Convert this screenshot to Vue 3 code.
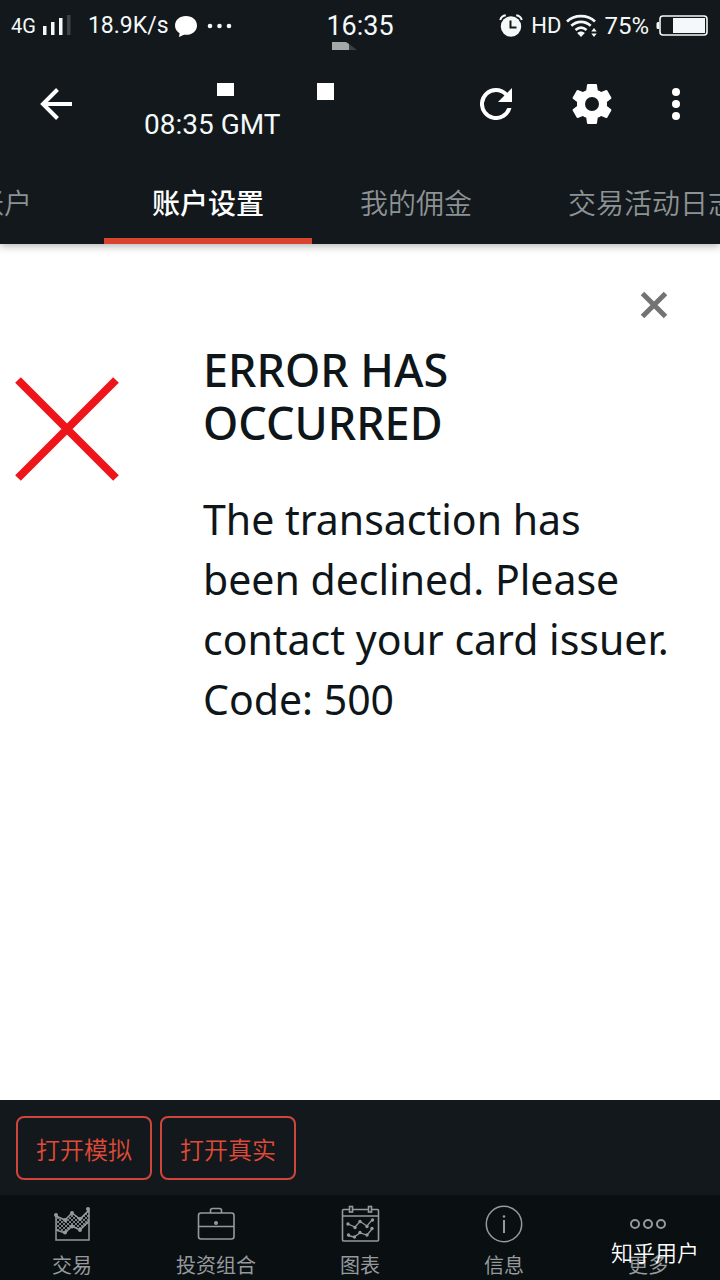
<script setup>
import { ref } from 'vue'

const tabs = ['账户', '账户设置', '我的佣金', '交易活动日志']
const activeTab = ref(1)
const open = ref(true)
const actions = ['打开模拟', '打开真实']
const nav = [
  { id: 'trade', label: '交易' },
  { id: 'portfolio', label: '投资组合' },
  { id: 'charts', label: '图表' },
  { id: 'info', label: '信息' },
  { id: 'more', label: '更多' },
]
</script>

<template>
  <div class="screen">
    <header class="top">
      <div class="status">
        <div class="status-left">
          <span class="network">4G</span>
          <svg class="signal" width="30" height="22" viewBox="0 0 30 22" aria-hidden="true">
            <g fill="#f4f8f8">
              <rect x="1" y="11" width="3.500" height="9" />
              <rect x="9" y="7" width="3.500" height="13" />
              <rect x="17" y="3" width="3.500" height="17" />
            </g>
            <rect x="25" y="0" width="3.500" height="20" fill="#3d4446" />
          </svg>
          <span class="speed">18.9K/s</span>
          <svg class="chat" width="24" height="24" viewBox="0 0 24 24" aria-hidden="true">
            <path d="M12 2C5.600 2 1 6 1 11.500c0 3.500 1.800 6 4.600 7.800L5 23l5-2.300c.7.100 1.300.1 2 .1 6.400 0 11-4 11-9.400S18.400 2 12 2z" fill="#fff" />
          </svg>
          <svg class="dots" width="26" height="8" viewBox="0 0 26 8" aria-hidden="true">
            <g fill="#f4f8f8"><circle cx="3" cy="4" r="2.300" /><circle cx="12.500" cy="4" r="2.300" /><circle cx="22" cy="4" r="2.300" /></g>
          </svg>
        </div>
        <div class="clock">
          16:35
          <svg class="clock-mark" width="26" height="8" viewBox="0 0 26 8" aria-hidden="true">
            <path d="M0 0h14l3 2v6H0z" fill="#a3a9a8" /><path d="M17 2l8 6h-8z" fill="#3b4243" />
          </svg>
        </div>
        <div class="status-right">
          <svg width="24" height="24" viewBox="0 0 24 24" aria-hidden="true">
            <circle cx="12" cy="12.500" r="10.200" fill="#f4f8f8" />
            <path d="M1.200 6C2 3.200 4 1.600 6.800 1.200M22.800 6C22 3.200 20 1.600 17.200 1.200" stroke="#f4f8f8" stroke-width="2" fill="none" />
            <path d="M11.500 6.500v7h6" stroke="#12181b" stroke-width="2" fill="none" />
          </svg>
          <span class="hd">HD</span>
          <svg class="wifi" width="32" height="24" viewBox="0 0 32 24" aria-hidden="true">
            <g fill="none" stroke="#f4f8f8" stroke-width="2.600">
              <path d="M1 7.500C8.500.3 21.500.3 29 7.500" />
              <path d="M5.300 11.800c5.600-5.200 13.800-5.200 19.400 0" />
              <path d="M9.500 16c3.400-3 7.600-3 11 0" />
            </g>
            <path d="M11.200 19c2.200-2 5.400-2 7.600 0L15 23z" fill="#f4f8f8" />
            <path d="M25.300 17.500l2.700-3.500 2.700 3.500zM25.300 19.500l2.700 3.500 2.700-3.500z" fill="#f4f8f8" />
          </svg>
          <span class="percent">75%</span>
          <svg class="battery" width="53" height="22" viewBox="0 0 53 22" aria-hidden="true">
            <rect x="4" y="1" width="47" height="19" rx="3" fill="none" stroke="#f4f8f8" stroke-width="1.600" />
            <path d="M3 7H2a1.500 1.500 0 0 0-1.500 1.500v4A1.500 1.500 0 0 0 2 14h1z" fill="#f4f8f8" />
            <rect x="17" y="3" width="32" height="15" fill="#f4f8f8" />
          </svg>
        </div>
      </div>

      <div class="toolbar">
        <button class="icon-button back" type="button" aria-label="返回">
          <svg width="32" height="32" viewBox="0 0 32 32"><path d="M32 16H3M17.500 1.500L3 16l14.500 14.500" fill="none" stroke="#fff" stroke-width="4" /></svg>
        </button>
        <div class="heading">
          <div class="masked" aria-hidden="true"><i class="block short"></i><i class="block"></i></div>
          <div class="time">08:35 GMT</div>
        </div>
        <button class="icon-button refresh" type="button" aria-label="刷新">
          <svg width="32" height="32" viewBox="4 4 16 16"><path d="M17.650 6.350A7.958 7.958 0 0 0 12 4a8 8 0 1 0 7.730 10h-2.080A6 6 0 1 1 12 6c1.660 0 3.140.69 4.220 1.780L13 11h7V4z" fill="#fff" /></svg>
        </button>
        <button class="icon-button settings" type="button" aria-label="设置">
          <svg width="48" height="48" viewBox="0 0 24 24"><path d="M19.430 12.980c.04-.32.070-.64.070-.98s-.03-.66-.07-.98l2.110-1.650c.19-.15.24-.42.120-.64l-2-3.460c-.12-.22-.39-.3-.61-.22l-2.490 1c-.52-.4-1.080-.73-1.690-.98l-.38-2.650A.488.488 0 0 0 14 2h-4c-.25 0-.46.180-.49.420l-.38 2.650c-.61.250-1.170.59-1.690.98l-2.490-1c-.23-.09-.49 0-.61.220l-2 3.460c-.13.220-.07.490.12.640l2.110 1.650c-.04.320-.07.650-.07.980s.03.660.070.980l-2.110 1.650c-.19.150-.24.420-.12.640l2 3.460c.12.220.39.300.61.220l2.490-1c.52.400 1.080.730 1.690.980l.38 2.650c.03.240.24.420.49.420h4c.25 0 .46-.18.490-.42l.38-2.650c.61-.25 1.170-.59 1.690-.98l2.490 1c.23.090.49 0 .61-.22l2-3.460c.12-.22.070-.49-.12-.64zM12 15.500a3.500 3.500 0 1 1 0-7 3.500 3.500 0 0 1 0 7z" fill="#fff" /></svg>
        </button>
        <button class="icon-button menu" type="button" aria-label="菜单">
          <svg width="8" height="32" viewBox="0 0 8 32"><g fill="#fff"><circle cx="4" cy="4" r="4" /><circle cx="4" cy="16" r="4" /><circle cx="4" cy="28" r="4" /></g></svg>
        </button>
      </div>

      <nav class="tabs">
        <button
          v-for="(tab, i) in tabs"
          :key="tab"
          type="button"
          class="tab"
          :class="{ active: i === activeTab }"
          @click="activeTab = i"
        >{{ tab }}</button>
      </nav>
    </header>

    <main class="content">
      <section v-if="open" class="dialog" role="alert">
        <div class="dialog-bar">
          <button class="icon-button" type="button" aria-label="关闭" @click="open = false">
            <svg width="28" height="28" viewBox="0 0 28 28"><path d="M2.500 2.500l23 23M25.500 2.500l-23 23" stroke="#737373" stroke-width="5" /></svg>
          </button>
        </div>
        <div class="dialog-body">
          <svg class="cross" width="104" height="104" viewBox="0 0 104 104" aria-hidden="true">
            <path d="M3 3l98 98M101 3L3 101" stroke="#ed1519" stroke-width="8" />
          </svg>
          <div class="message">
            <h1>ERROR HAS OCCURRED</h1>
            <p>The transaction has been declined. Please contact your card issuer. Code: 500</p>
          </div>
        </div>
      </section>
    </main>

    <footer class="bottom">
      <div class="actions">
        <button v-for="action in actions" :key="action" type="button" class="action">{{ action }}</button>
      </div>
      <nav class="nav">
        <a v-for="item in nav" :key="item.id" class="nav-item" :href="'#' + item.id">
          <svg v-if="item.id === 'trade'" width="40" height="40" viewBox="0 0 40 40" aria-hidden="true">
            <defs>
              <pattern id="hatch" width="4" height="4" patternUnits="userSpaceOnUse">
                <path d="M0 0l4 4M4 0L0 4" stroke="#969a9c" stroke-width="0.800" />
              </pattern>
            </defs>
            <path d="M4 12l9 4 7-7 8 6 9-9v13l-9 7-7-4-7 7-10-3z" fill="url(#hatch)" />
            <g fill="none" stroke="#969a9c" stroke-width="1.500">
              <path d="M4 12v24h33V6" />
              <path d="M4 12l9 4 7-7 8 6 9-9M4 26l9 3 7-7 8 4 9-9" />
            </g>
            <g fill="#969a9c"><circle cx="4" cy="11" r="2" /><circle cx="13" cy="16" r="2" /><circle cx="20" cy="9" r="2" /><circle cx="28" cy="15" r="2" /><circle cx="36" cy="5" r="2" /><circle cx="13" cy="28.500" r="2" /><circle cx="20" cy="22.500" r="2" /><circle cx="28" cy="26" r="2" /></g>
          </svg>
          <svg v-else-if="item.id === 'portfolio'" width="40" height="40" viewBox="0 0 40 40" aria-hidden="true">
            <g fill="none" stroke="#969a9c" stroke-width="1.600">
              <rect x="2.500" y="9" width="35.500" height="26" rx="2.500" />
              <path d="M14.500 9V6.500a2 2 0 0 1 2-2h7a2 2 0 0 1 2 2V9M2.500 22.500H38" />
            </g>
            <circle cx="20" cy="19" r="2" fill="#969a9c" />
          </svg>
          <svg v-else-if="item.id === 'charts'" width="40" height="40" viewBox="0 0 40 40" aria-hidden="true">
            <g fill="none" stroke="#969a9c" stroke-width="1.600">
              <path d="M9 5.500H3.500A1 1 0 0 0 2.500 6.500V36a1 1 0 0 0 1 1h34a1 1 0 0 0 1-1V6.500a1 1 0 0 0-1-1H32M13 5.500h15M2.500 12h36" />
              <rect x="9.500" y="2.500" width="3" height="5.500" /><rect x="28.500" y="2.500" width="3" height="5.500" />
              <path d="M8 20l7 3 5-5.500 7 4.500 5-6M8 31.500l6 1.500 6-4 7 2 5-6" stroke-width="1.300" />
            </g>
            <g fill="#969a9c"><circle cx="8" cy="20" r="1.700" /><circle cx="15" cy="23.500" r="1.700" /><circle cx="20" cy="17.500" r="1.700" /><circle cx="27" cy="22.500" r="1.700" /><circle cx="32.500" cy="16" r="1.700" /><circle cx="8.500" cy="31" r="1.700" /><circle cx="14.500" cy="33" r="1.700" /><circle cx="20" cy="28.500" r="1.700" /><circle cx="27" cy="31" r="1.700" /><circle cx="32" cy="24.500" r="1.700" /></g>
          </svg>
          <svg v-else-if="item.id === 'info'" width="40" height="40" viewBox="0 0 40 40" aria-hidden="true">
            <circle cx="20" cy="20" r="17.700" fill="none" stroke="#969a9c" stroke-width="1.500" />
            <path d="M20 16v13" stroke="#969a9c" stroke-width="2" /><circle cx="20" cy="12.500" r="1.300" fill="#969a9c" />
          </svg>
          <svg v-else width="40" height="40" viewBox="0 0 40 40" aria-hidden="true">
            <g fill="none" stroke="#969a9c" stroke-width="2"><circle cx="7" cy="20" r="4" /><circle cx="20" cy="20" r="4" /><circle cx="33" cy="20" r="4" /></g>
          </svg>
          <span>{{ item.label }}</span>
        </a>
      </nav>
      <span class="watermark">知乎用户</span>
    </footer>
  </div>
</template>

<style>
body {
  margin: 0;
  background: #fff;
}
</style>

<style scoped>
.screen {
  display: flex;
  flex-direction: column;
  min-height: 100vh;
  overflow: hidden;
  font-family: Roboto, "Noto Sans CJK SC", sans-serif;
  color: #f4f8f8;
}
.screen svg {
  display: block;
  flex: none;
}
button {
  margin: 0;
  padding: 0;
  border: 0;
  background: none;
  font: inherit;
  color: inherit;
  cursor: pointer;
}
.top {
  position: relative;
  background: #12181b;
  box-shadow: 0 2px 8px rgba(0, 0, 0, 0.3);
}
.status {
  display: grid;
  grid-template-columns: 1fr auto 1fr;
  align-items: center;
  box-sizing: border-box;
  height: 48px;
  padding: 3px 11px 0;
  font-size: 24px;
  line-height: 28px;
}
.status-left,
.status-right {
  display: flex;
  align-items: center;
}
.status-right {
  justify-content: flex-end;
}
.network {
  margin-right: 6px;
  font-size: 20px;
}
.signal {
  margin-right: 16px;
}
.speed {
  font-size: 23px;
}
.chat {
  margin: 0 9px 0 5px;
}
.clock {
  position: relative;
  font-size: 27px;
}
.clock-mark {
  position: absolute;
  left: 6px;
  top: 30px;
}
.hd {
  margin: 0 5px 0 8px;
  font-size: 22px;
}
.percent {
  margin: 0 7px 0 6px;
}
.toolbar {
  display: flex;
  align-items: center;
  height: 112px;
  padding: 0 40px;
}
.heading {
  flex: 1;
  margin-left: 72px;
  padding-top: 16px;
}
.masked {
  display: flex;
  align-items: flex-start;
  gap: 83px;
  height: 26px;
  padding-left: 73px;
}
.block {
  width: 17px;
  height: 17px;
  background: #fff;
}
.short {
  height: 13px;
}
.time {
  font-size: 28px;
  line-height: 32px;
}
.settings {
  margin: 0 56px;
}
.tabs {
  display: flex;
  height: 84px;
  margin-left: -96px;
  overflow: hidden;
}
.tab {
  flex: none;
  box-sizing: border-box;
  min-width: 208px;
  padding: 0 48px;
  border-top: 6px solid transparent;
  border-bottom: 6px solid transparent;
  font-size: 28px;
  font-weight: 350;
  color: #8d9294;
}
.tab:first-child {
  min-width: 200px;
}
.tab.active {
  border-bottom-color: #d9442e;
  font-weight: 500;
  color: #fff;
}
.content {
  flex: 1;
  background: #fff;
  color: #0f1619;
  font-family: "Noto Sans", "Open Sans", sans-serif;
}
.dialog-bar {
  display: flex;
  justify-content: flex-end;
  padding: 47px 52px 0;
}
.dialog-body {
  display: flex;
  align-items: flex-start;
  gap: 84px;
  padding: 24px 40px 0 15px;
}
.cross {
  margin-top: 34px;
}
h1 {
  margin: 0 0 40px;
  max-width: 320px;
  font-size: 45px;
  font-weight: 500;
  line-height: 53px;
}
p {
  margin: 0;
  font-size: 41px;
  line-height: 60px;
}
.bottom {
  position: relative;
  background: #12181b;
}
.actions {
  display: flex;
  gap: 8px;
  padding: 16px 16px 15px;
}
.action {
  height: 64px;
  padding: 0 18px;
  border: 2px solid #d0453a;
  border-radius: 8px;
  font-size: 24px;
  font-weight: 350;
  color: #e04a38;
}
.nav {
  display: flex;
  background: #0a0f12;
}
.nav-item {
  display: flex;
  flex: 1;
  flex-direction: column;
  align-items: center;
  gap: 8px;
  padding: 9px 0 0;
  font-size: 20px;
  line-height: 28px;
  color: #969a9c;
  text-decoration: none;
}
.watermark {
  position: absolute;
  right: 21px;
  bottom: 10px;
  font-size: 22px;
  font-weight: 350;
  line-height: 32px;
  color: #fff;
}
</style>
